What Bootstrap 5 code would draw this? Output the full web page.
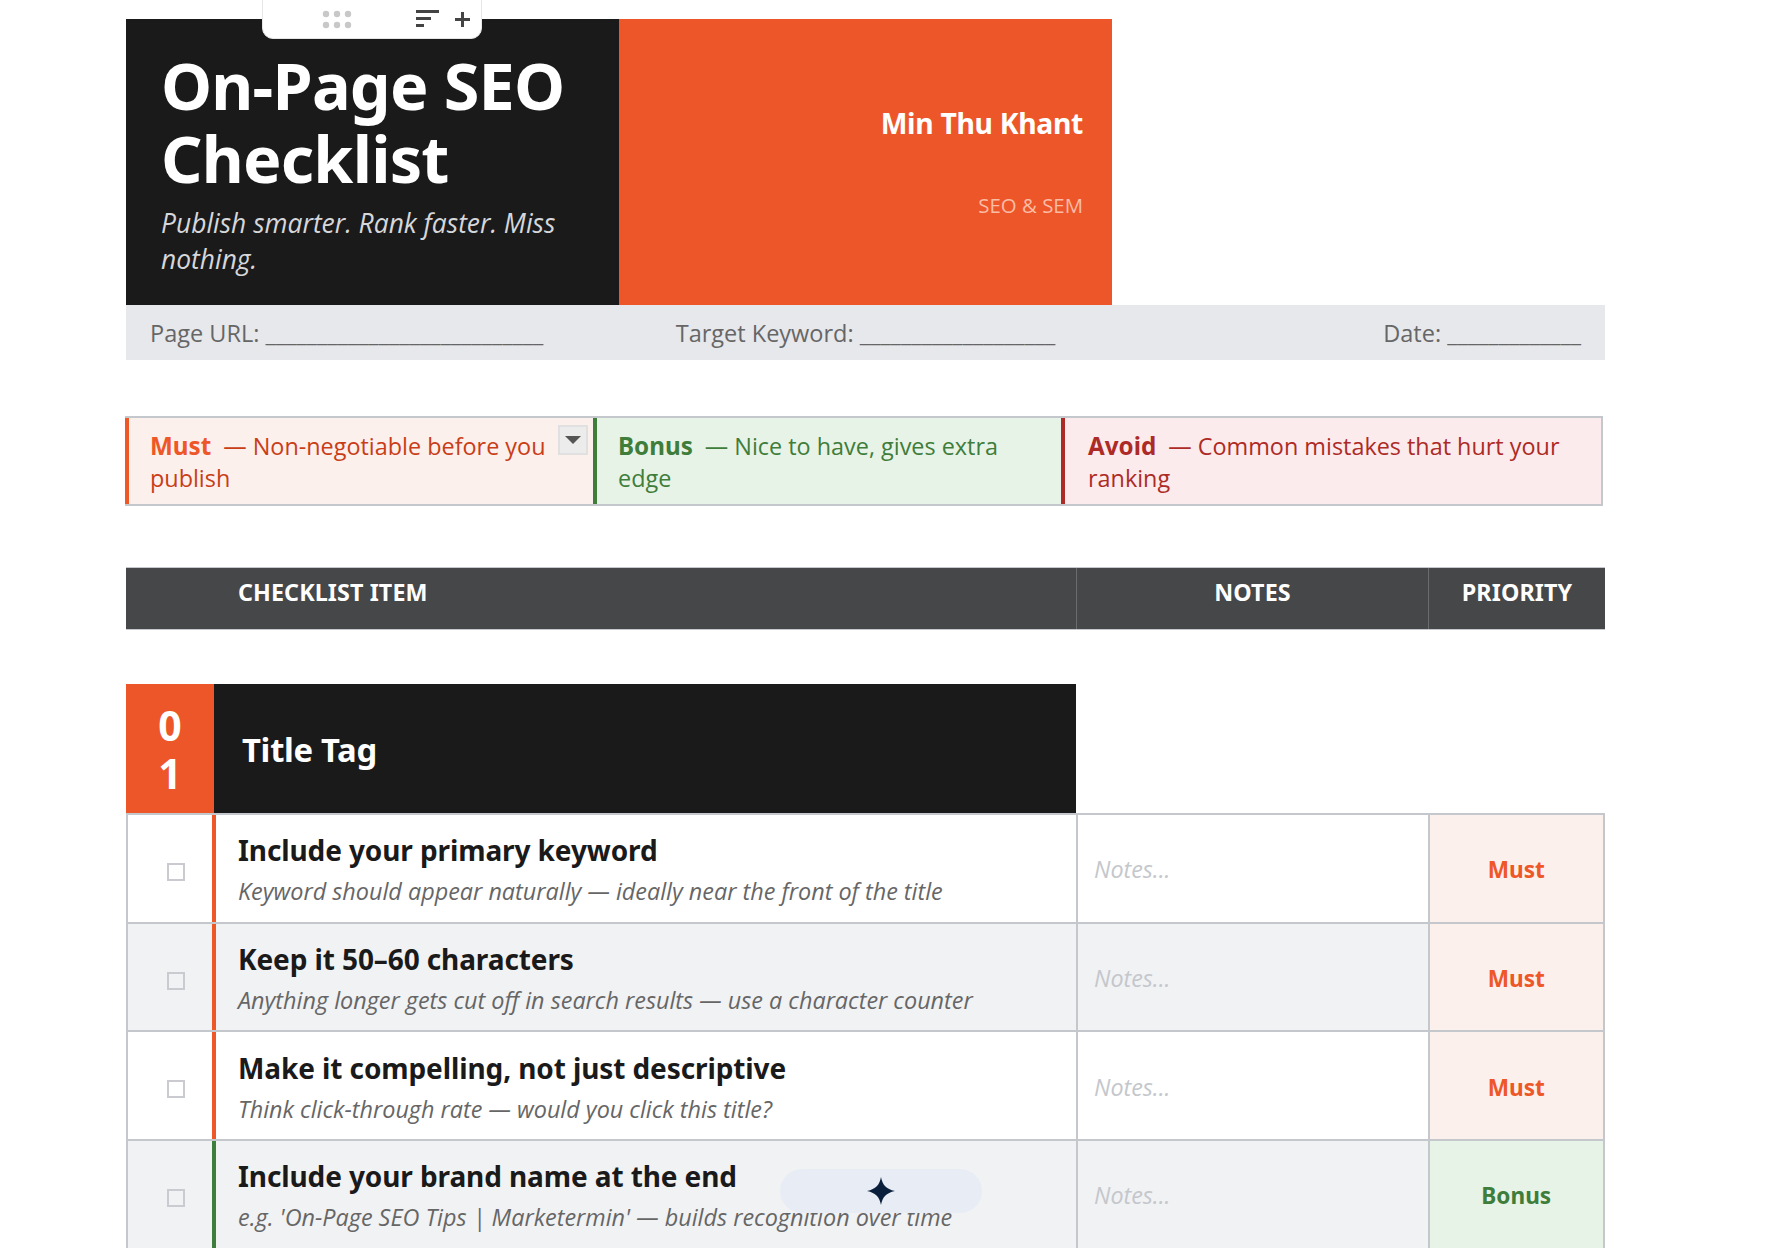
<!DOCTYPE html>
<html lang="en"><head><meta charset="utf-8"><title>On-Page SEO Checklist</title>
<link rel="stylesheet" href="https://cdn.jsdelivr.net/npm/bootstrap@5.3.0/dist/css/bootstrap.min.css">
<style>
html,body{height:1248px;overflow:hidden;background:#fff}
body{font-family:"Open Sans",sans-serif;color:#1a1a1a}
.sheet{width:1479px;margin-left:126px;padding-top:19px;position:relative}
.hd{font-family:"Noto Sans",sans-serif;font-weight:700}
.hero{height:286px}
.hero-l{width:492.500px;background:#1a1a1a;padding:30px 20px 0 35px}
.hero-r{width:493.500px;background:#ed5628;padding:0 29px;height:100%}
.hero-t{font-size:64.700px;line-height:73px;color:#fff;margin:0;letter-spacing:-.8px}
.hero-s{font-size:26.4px;line-height:36px;color:#d6d7da;font-style:italic;margin:10px 0 0}
.name{font-size:28.300px;color:#fff;line-height:38px;margin-top:85px;letter-spacing:-.3px}
.role{font-size:20.400px;color:#fbbca6;line-height:28px;margin-top:49px}
.meta{height:55px;background:#e7e8ec;font-size:23.500px;color:#666;line-height:56px}
.meta>div{width:493px;padding:0 24px;white-space:nowrap}
.legend{margin-top:56px;margin-left:-1px;width:1478px;height:90px;border-top:2px solid #c4c7cc;border-bottom:2px solid #c4c7cc;border-right:2px solid #c4c7cc;font-size:23.400px;line-height:32px;position:relative}
.lg{width:468px;height:100%;padding:12px 20px 0 21px;border-left:4px solid}
.lg-a{flex:1;width:auto;padding-left:23px}
.lg b{display:inline-block;line-height:1;font-family:"Noto Sans",sans-serif;font-size:24.200px;margin-right:6px}
.lg-must{background:#fcf0ec;border-color:#ee5728;color:#c93d17}
.lg-must b{color:#ee5728}
.lg-bonus{background:#e8f3e8;border-color:#3f7d3a;color:#3f7d3a}
.lg-avoid{background:#fcebed;border-color:#ad2b26;color:#ad2b26}
.thead{margin-top:61px;height:63px;background:#464749;color:#fff;font-size:23.300px;line-height:1;border-top:1px solid #c4c7cc;border-bottom:1px solid #c4c7cc;letter-spacing:.1px}
.thead>div{padding-top:13px;height:100%}
.th-i{width:950px;padding-left:112px}
.th-n{width:352px;border-left:1px solid #6b6c6e;text-align:center}
.th-p{flex:1;border-left:1px solid #6b6c6e;text-align:center}
.sect{margin-top:54px;width:950px;height:129px;background:#1a1a1a;color:#fff}
.sect-n{width:88px;background:#ed5628;font-size:41px;line-height:48px;text-align:center;padding:0 21px;word-break:break-all}
.sect-t{font-size:32.800px;padding:2px 0 0 28px;letter-spacing:-.3px}
.rowx{height:108.7px;border-top:2px solid #c4c7cc;border-left:2px solid #c4c7cc;border-right:2px solid #c4c7cc}
.alt{background:#f1f2f4}
.c-chk{width:84px}
.c-box{width:18px;height:18px;border:2px solid #c9cbd0;margin-left:39px;margin-top:7px;background:transparent}
.c-item{width:864px;border-left:4px solid;padding:16.400px 0 0 22px}
.c-must{border-left-color:#ee5728}
.c-bonus{border-left-color:#3f7d3a}
.it{font-size:28px;line-height:38px;letter-spacing:-.1px}
.ds{font-size:23.400px;line-height:32px;font-style:italic;color:#666;margin-top:6px;white-space:nowrap}
.c-note{width:351.500px;border-left:2px solid #c4c7cc;font-size:23.300px;font-style:italic;color:#c4c7cc;padding:3px 0 0 16px}
.c-pri{flex:1;border-left:2px solid #c4c7cc;font-size:22.600px;padding-top:4px}
.p-must{background:#fcf0ec;color:#ee5728}
.p-bonus{background:#e8f3e8;color:#3f7d3a}
.toolbar{position:absolute;left:136px;top:-2px;width:220px;height:41px;background:#fff;border:1px solid #e6e6e6;border-radius:0 0 11px 11px;z-index:5}
.tb-svg{position:absolute;left:0;top:0}
.lgbtn{position:absolute;left:433px;top:7px;width:30px;height:30px;background:#ececec;border:2px solid #e0e0e0}
.spark{position:absolute;left:654px;top:1169px;width:202px;height:44px;border-radius:22px;background:#e8edf5;z-index:5}
</style></head>
<body>
<div class="sheet">
  <div class="toolbar"><svg class="tb-svg" width="220" height="38" viewBox="0 0 220 38">
    <g fill="#c8c8c8"><circle cx="63" cy="15" r="3.2"/><circle cx="74" cy="15" r="3.2"/><circle cx="85" cy="15" r="3.2"/><circle cx="63" cy="26" r="3.2"/><circle cx="74" cy="26" r="3.2"/><circle cx="85" cy="26" r="3.2"/></g>
    <g fill="#444"><rect x="153" y="11" width="23" height="3"/><rect x="153" y="18" width="15" height="3"/><rect x="153" y="25" width="8" height="3"/><rect x="192" y="19" width="15" height="3"/><rect x="198" y="13" width="3" height="15"/></g>
  </svg></div>
  <div class="hero d-flex">
    <div class="hero-l"><h1 class="hero-t hd">On-Page SEO Checklist</h1><p class="hero-s">Publish smarter. Rank faster. Miss nothing.</p></div>
    <div class="hero-r text-end"><div class="name hd">Min Thu Khant</div><div class="role">SEO &amp; SEM</div></div>
  </div>
  <div class="meta d-flex">
    <div>Page URL: ___________________________</div>
    <div class="text-center">Target Keyword: ___________________</div>
    <div class="text-end">Date: _____________</div>
  </div>
  <div class="legend d-flex">
    <div class="lg lg-must"><b>Must</b> — Non-negotiable before you publish</div>
    <div class="lg lg-bonus"><b>Bonus</b> — Nice to have, gives extra edge</div>
    <div class="lg lg-a lg-avoid"><b>Avoid</b> — Common mistakes that hurt your ranking</div>
    <div class="lgbtn d-flex align-items-center justify-content-center"><svg width="18" height="10" viewBox="0 0 18 10"><path d="M1 1h16L9 9z" fill="#555"/></svg></div>
  </div>
  <div class="thead hd d-flex">
    <div class="th-i">CHECKLIST ITEM</div><div class="th-n">NOTES</div><div class="th-p">PRIORITY</div>
  </div>
  <div class="sect d-flex">
    <div class="sect-n hd d-flex align-items-center">01</div>
    <div class="sect-t hd d-flex align-items-center">Title Tag</div>
  </div>
  <div class="rowx d-flex">
    <div class="c-chk d-flex align-items-center"><div class="c-box"></div></div>
    <div class="c-item c-must"><div class="it hd">Include your primary keyword</div><div class="ds">Keyword should appear naturally — ideally near the front of the title</div></div>
    <div class="c-note d-flex align-items-center">Notes...</div>
    <div class="c-pri p-must hd d-flex align-items-center justify-content-center">Must</div>
  </div>
  <div class="rowx alt d-flex">
    <div class="c-chk d-flex align-items-center"><div class="c-box"></div></div>
    <div class="c-item c-must"><div class="it hd">Keep it 50–60 characters</div><div class="ds">Anything longer gets cut off in search results — use a character counter</div></div>
    <div class="c-note d-flex align-items-center">Notes...</div>
    <div class="c-pri p-must hd d-flex align-items-center justify-content-center">Must</div>
  </div>
  <div class="rowx d-flex">
    <div class="c-chk d-flex align-items-center"><div class="c-box"></div></div>
    <div class="c-item c-must"><div class="it hd">Make it compelling, not just descriptive</div><div class="ds">Think click-through rate — would you click this title?</div></div>
    <div class="c-note d-flex align-items-center">Notes...</div>
    <div class="c-pri p-must hd d-flex align-items-center justify-content-center">Must</div>
  </div>
  <div class="rowx alt d-flex">
    <div class="c-chk d-flex align-items-center"><div class="c-box"></div></div>
    <div class="c-item c-bonus"><div class="it hd">Include your brand name at the end</div><div class="ds">e.g. 'On-Page SEO Tips | Marketermin' — builds recognition over time</div></div>
    <div class="c-note d-flex align-items-center">Notes...</div>
    <div class="c-pri p-bonus hd d-flex align-items-center justify-content-center">Bonus</div>
  </div>
  <div class="spark d-flex align-items-center justify-content-center"><svg width="30" height="30" viewBox="0 0 30 30"><path d="M15 1C16.5 9 20 13 29 15 20 17 16.5 21 15 29 13.500 21 10 17 1 15 10 13 13.500 9 15 1Z" fill="#0a1f3c"/></svg></div>
</div>
</body></html>
